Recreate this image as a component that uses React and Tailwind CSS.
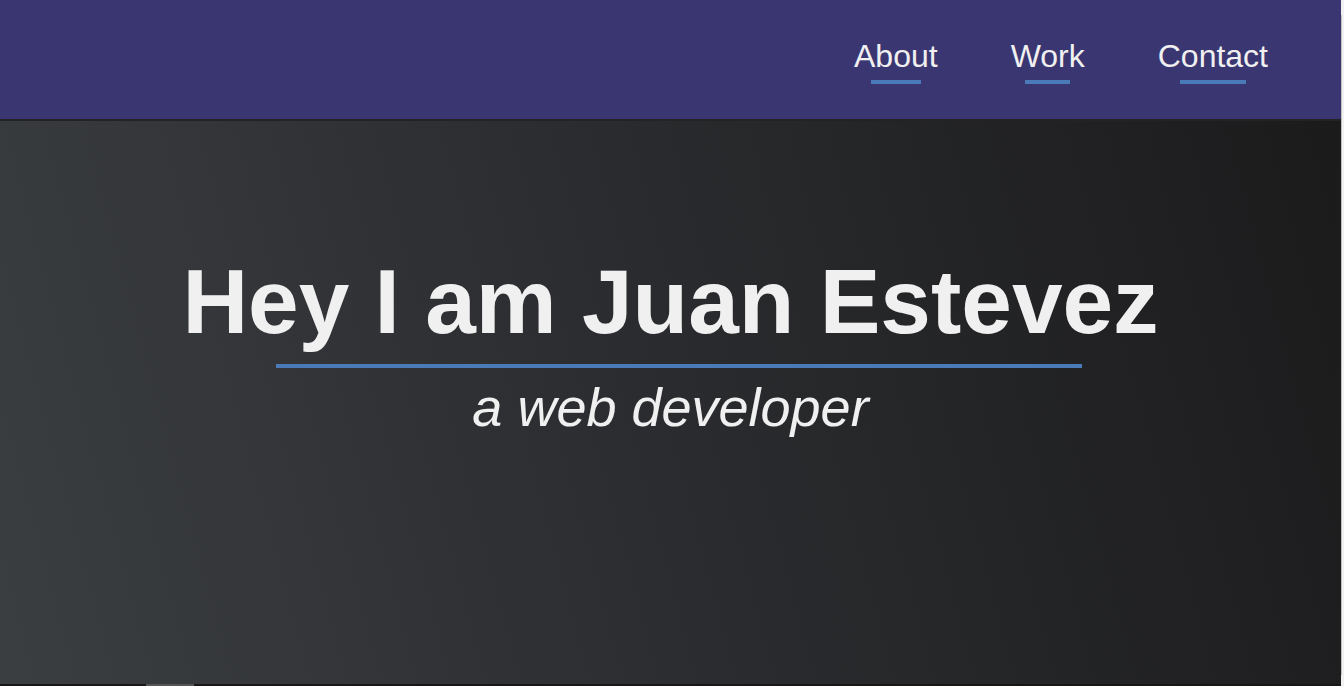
import React from "react"

const links = ["About", "Work", "Contact"]

export default function App() {
  return (
    <div className="flex h-[686px] w-full overflow-hidden font-['Liberation_Sans',Arial,sans-serif] text-[#f0f0f0]">
      <div className="flex min-w-0 flex-1 flex-col">
        {/* Header */}
        <header className="flex h-[121px] shrink-0 items-start justify-end gap-[73px] border-b-2 border-[#232325] bg-[#3a3672] pr-[73px] pt-[40px]">
          {links.map((link) => (
            <a key={link} href="#" className="flex flex-col items-center">
              <span className="text-[32px] leading-none">{link}</span>
              <span className="mt-[8px] h-[4px] w-[60%] bg-[#4a7ab8]" />
            </a>
          ))}
        </header>

        {/* Hero */}
        <section className="flex flex-1 flex-col items-center bg-[linear-gradient(75deg,#3b3e41_0%,#2c2d30_45%,#1b1b1c_100%)] pt-[135px]">
          <h1 className="text-[91px] font-bold leading-none">Hey I am Juan Estevez</h1>
          <div className="ml-[17px] mt-[17px] h-[4px] w-[806px] bg-[#4a7ab8]" />
          <p className="mt-[12px] text-[54px] italic leading-none">a web developer</p>
        </section>

        <div className="h-[2px] shrink-0 bg-[#1a1616]">
          <div className="ml-[146px] h-full w-[48px] bg-[#555555]" />
        </div>
      </div>

      {/* scrollbar strip */}
      <div className="flex w-[3px] shrink-0 flex-col bg-[#f1f1f1]">
        <div className="mt-[15px] h-[660px] w-[1px] bg-[#c1c1c1]" />
      </div>
    </div>
  )
}
